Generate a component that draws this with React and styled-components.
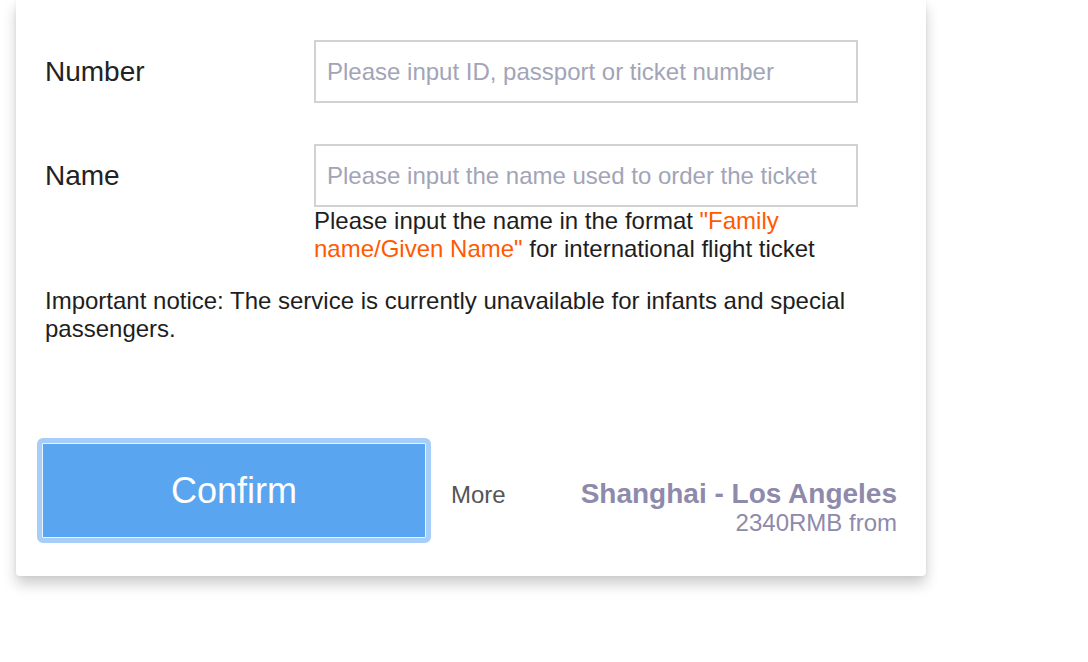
import React from 'react'
import styled, { createGlobalStyle } from 'styled-components'

const GlobalStyle = createGlobalStyle`
    html, body {
        margin: 0;
        padding: 0;
        background: #ffffff;
        font-family: "Liberation Sans", Arial, sans-serif;
    }
`

const Page = styled.div`
    width: 1088px;
    height: 662px;
    overflow: hidden;
    background: #fff;
`

const Card = styled.div`
    width: 910px;
    margin-left: 16px;
    box-sizing: border-box;
    padding: 40px 29px 33px 29px;
    background: #fff;
    border-radius: 0 0 4px 4px;
    box-shadow: 0 8px 14px rgba(0, 0, 0, 0.2), 0 0 4px rgba(0, 0, 0, 0.06);
`

const Field = styled.div`
    display: grid;
    grid-template-columns: 269px 544px;
    align-items: start;
    margin-bottom: ${p => p.gap || 0}px;
`

const Label = styled.div`
    font-size: 28px;
    color: #222;
    line-height: 63px;
`

const Input = styled.input`
    width: 544px;
    height: 63px;
    box-sizing: border-box;
    border: 2px solid #d2d2d2;
    padding: 0 11px;
    font-family: "Liberation Sans", Arial, sans-serif;
    font-size: 24px;
    color: #333;
    outline: none;
    &::placeholder {
        color: #a2a4b7;
    }
`

const Hint = styled.div`
    font-size: 24px;
    line-height: 28px;
    color: #1e1e1e;
`

const Accent = styled.span`
    color: #ff5a00;
`

const Notice = styled.p`
    margin: 24px 0 95px 0;
    font-size: 24px;
    line-height: 28px;
    color: #1e1e1e;
    max-width: 852px;
`

const Footer = styled.div`
    display: flex;
    align-items: center;
`

const ConfirmButton = styled.button`
    width: 394px;
    height: 105px;
    margin-left: -8px;
    box-sizing: border-box;
    border: 5px solid #a6cef9;
    border-radius: 6px;
    background: #5aa5ef;
    box-shadow: inset 0 0 0 1px #eaf4fe;
    color: #fff;
    font-family: "Liberation Sans", Arial, sans-serif;
    font-size: 36px;
    cursor: pointer;
`

const MoreLink = styled.a`
    margin-left: 20px;
    margin-top: 8px;
    font-size: 24px;
    color: #555;
    text-decoration: none;
`

const Route = styled.div`
    margin-left: auto;
    margin-top: 34px;
    text-align: right;
    color: #8e8aab;
`

const RouteName = styled.div`
    font-size: 28px;
    font-weight: bold;
    line-height: 30px;
`

const Price = styled.div`
    font-size: 24px;
    line-height: 27px;
`

export default function App() {
    return (
        <Page>
            <GlobalStyle />
            <Card>
                <Field gap={41}>
                    <Label>Number</Label>
                    <Input placeholder="Please input ID, passport or ticket number" />
                </Field>
                <Field>
                    <Label>Name</Label>
                    <div>
                        <Input placeholder="Please input the name used to order the ticket" />
                        <Hint>
                            Please input the name in the format <Accent>"Family name/Given Name"</Accent> for international flight ticket
                        </Hint>
                    </div>
                </Field>
                <Notice>
                    Important notice: The service is currently unavailable for infants and special passengers.
                </Notice>
                <Footer>
                    <ConfirmButton>Confirm</ConfirmButton>
                    <MoreLink href="#">More</MoreLink>
                    <Route>
                        <RouteName>Shanghai - Los Angeles</RouteName>
                        <Price>2340RMB from</Price>
                    </Route>
                </Footer>
            </Card>
        </Page>
    )
}
